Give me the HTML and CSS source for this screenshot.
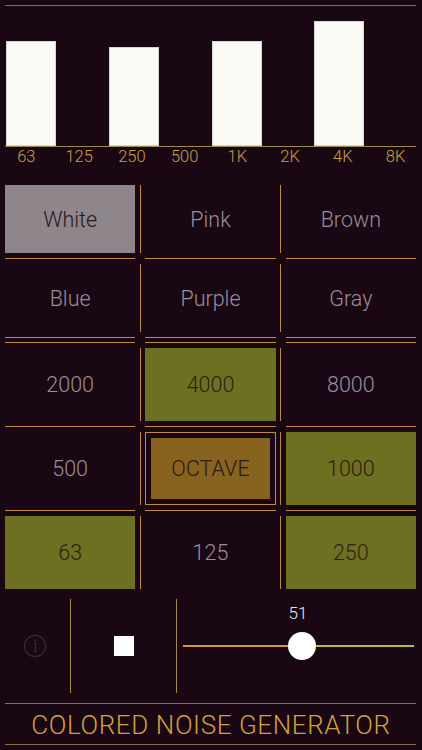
FILE: index.html
```
<!DOCTYPE html>
<html>
<head>
<meta charset="utf-8">
<link rel="stylesheet" href="styles.css">
</head>
<body>
<div class="app">
  <div class="rule dim top"></div>
  <div class="bars">
    <div class="slot"><div class="bar" style="height:105px"></div></div>
    <div class="slot"></div>
    <div class="slot"><div class="bar" style="height:99px"></div></div>
    <div class="slot"></div>
    <div class="slot"><div class="bar" style="height:105px"></div></div>
    <div class="slot"></div>
    <div class="slot"><div class="bar" style="height:125px"></div></div>
    <div class="slot"></div>
  </div>
  <div class="rule base"></div>
  <div class="labels">
    <span>63</span><span>125</span><span>250</span><span>500</span><span>1K</span><span>2K</span><span>4K</span><span>8K</span>
  </div>

  <section class="group colors">
    <div class="cells">
      <div class="cell gray">White</div>
      <div class="vline"></div>
      <div class="cell">Pink</div>
      <div class="vline"></div>
      <div class="cell">Brown</div>
    </div>
    <div class="hlines"><i></i><i></i><i></i></div>
    <div class="cells">
      <div class="cell">Blue</div>
      <div class="vline"></div>
      <div class="cell">Purple</div>
      <div class="vline"></div>
      <div class="cell">Gray</div>
    </div>
    <div class="hlines"><i></i><i></i><i></i></div>
  </section>

  <section class="group freqs">
    <div class="hlines"><i></i><i></i><i></i></div>
    <div class="cells tall">
      <div class="cell">2000</div>
      <div class="vline"></div>
      <div class="cell green">4000</div>
      <div class="vline"></div>
      <div class="cell">8000</div>
    </div>
    <div class="hlines"><i></i><i></i><i></i></div>
    <div class="cells tall">
      <div class="cell">500</div>
      <div class="vline"></div>
      <div class="cell octave">OCTAVE</div>
      <div class="vline"></div>
      <div class="cell green">1000</div>
    </div>
    <div class="hlines"><i></i><i></i><i></i></div>
    <div class="cells tall">
      <div class="cell green">63</div>
      <div class="vline"></div>
      <div class="cell">125</div>
      <div class="vline"></div>
      <div class="cell green">250</div>
    </div>
  </section>

  <div class="controls">
    <div class="info">
      <svg width="24" height="24" viewBox="0 0 24 24">
        <circle cx="12" cy="12" r="10.6" fill="none" stroke="#3a2634" stroke-width="1.2"/>
        <circle cx="12" cy="6.6" r="1.1" fill="#3a2634"/>
        <path d="M10.4 9.6 H12.6 V17.2 M10.2 17.2 H14" fill="none" stroke="#3a2634" stroke-width="1.2"/>
      </svg>
    </div>
    <div class="cvline"></div>
    <div class="stop"><div class="square"></div></div>
    <div class="cvline"></div>
    <div class="slider">
      <div class="track left"></div>
      <div class="thumb"><span class="value">51</span></div>
      <div class="track right"></div>
    </div>
  </div>

  <div class="rule dim mid"></div>
  <div class="title">COLORED NOISE GENERATOR</div>
  <div class="rule dim"></div>
</div>
</body>
</html>
```
FILE: styles.css
```
html, body {
  margin: 0;
  padding: 0;
  background: #1a0714;
}
.app {
  width: 422px;
  height: 750px;
  overflow: hidden;
  background: #1a0714;
  font-family: Roboto, "Liberation Sans", sans-serif;
  font-weight: 300;
}
.rule {
  height: 1px;
  margin: 0 6px 0 5px;
}
.rule.dim {
  background: #857048;
}
.rule.top {
  margin-top: 5px;
}
.rule.base {
  background: #9a8a52;
}
.bars {
  display: grid;
  grid-template-columns: repeat(8, 51.375px);
  padding: 0 5px 0 6px;
  height: 140px;
  align-items: end;
}
.bar {
  width: 50px;
  background: #fbfbf6;
  box-shadow: inset 0 0 0 1px #d8d6d2;
}
.labels {
  display: grid;
  grid-template-columns: repeat(8, 1fr);
  height: 20px;
  line-height: 20px;
  font-size: 16.5px;
  color: #c9a04a;
  text-align: center;
}
.group {
  display: flex;
  flex-direction: column;
  gap: 5px;
}
.colors {
  margin-top: 18px;
}
.freqs {
  margin-top: 4px;
}
.cells {
  display: flex;
  height: 68px;
  padding-left: 5px;
}
.cells.tall {
  height: 73px;
}
.cell {
  box-sizing: border-box;
  width: 130.33px;
  flex: none;
  display: flex;
  align-items: center;
  justify-content: center;
  font-size: 21.5px;
  color: #998e99;
}
.cell.gray {
  background: #8e868b;
  color: #2a1820;
}
.cell.green {
  background: #6d7021;
  color: #2a2214;
}
.cell.octave {
  border: 1px solid #c08a3a;
  padding: 5px;
  background: #87631f;
  background-clip: content-box;
  color: #2a1814;
}
.vline {
  width: 1px;
  flex: none;
  margin: 0 4.5px;
  background: #c08a3a;
}
.hlines {
  display: flex;
  gap: 10px;
  height: 1px;
  padding-left: 5px;
}
.hlines i {
  display: block;
  width: 130.33px;
  flex: none;
  background: #c08a3a;
}
.controls {
  display: flex;
  height: 94px;
  margin-top: 10px;
}
.info {
  width: 70px;
  flex: none;
  display: flex;
  align-items: center;
  justify-content: center;
}
.cvline {
  width: 1px;
  flex: none;
  background: #a08c42;
}
.stop {
  width: 105px;
  flex: none;
  display: flex;
  align-items: center;
  justify-content: center;
}
.square {
  width: 20px;
  height: 20px;
  background: #ffffff;
}
.slider {
  flex: 1;
  display: flex;
  align-items: center;
  padding: 0 8px 0 6px;
}
.track {
  height: 2px;
}
.track.left {
  width: 105px;
  flex: none;
  background: #d69a2c;
}
.track.right {
  flex: 1;
  background: #b3bd3c;
}
.thumb {
  position: relative;
  width: 28px;
  height: 28px;
  flex: none;
  border-radius: 50%;
  background: #ffffff;
}
.value {
  position: absolute;
  left: 50%;
  bottom: 100%;
  transform: translateX(-50%);
  margin-left: -4px;
  margin-bottom: 9px;
  font-size: 17px;
  line-height: 20px;
  color: #ece6ec;
}
.rule.mid {
  margin-top: 10px;
}
.title {
  height: 40px;
  line-height: 42px;
  text-align: center;
  font-size: 26px;
  letter-spacing: 0.6px;
  color: #d4a03a;
}
```
